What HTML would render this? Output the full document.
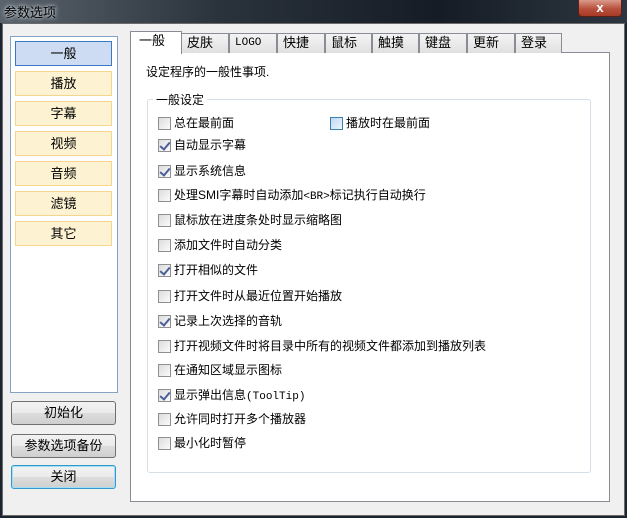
<!DOCTYPE html><html><head><meta charset="utf-8"><style>
*{margin:0;padding:0;box-sizing:border-box}
body{width:627px;height:518px;overflow:hidden;background:#1b2430;font-family:"Liberation Sans","Noto Sans CJK SC",sans-serif;font-size:12px;color:#000;position:relative}
.a{position:absolute}
.title{left:0;top:0;width:627px;height:23px;background:linear-gradient(90deg,#5a636c 0%,#2a323c 35%,#151c26 70%,#2d3640 100%)}
.tt{left:4px;top:2px;color:#000;font-size:13px;text-shadow:0 0 6px #cfd6dd,0 0 3px #cfd6dd}
.close{left:578px;top:0;width:44px;height:17px;background:linear-gradient(#d99a8c,#b8503c 55%,#a83a26);border:1px solid #5a2017;border-top:none;border-radius:0 0 4px 4px;color:#fff;font-weight:bold;text-align:center;font-size:13px;line-height:15px}
.win{left:2px;top:23px;width:623px;height:493px;background:#f0f0f0;border:1px solid #6b6b6b}
.lp{left:10px;top:36px;width:108px;height:357px;background:#fff;border:1px solid #84a3c4}
.it{position:absolute;left:15px;width:97px;height:25px;background:#fdf3d2;border:1px solid #f5d68c;text-align:center;line-height:23px;font-size:13px}
.it.s{background:#cddcf2;border:1px solid #3c78c8}
.btn{position:absolute;left:11px;width:105px;height:24px;border:1px solid #707070;border-radius:3px;background:linear-gradient(#f2f2f2,#ebebeb 50%,#dddddd 51%,#cfcfcf);text-align:center;line-height:22px;font-size:13px}
.tab{position:absolute;top:33px;height:20px;border:1px solid #898c95;border-bottom:none;background:linear-gradient(#f4f4f4,#e0e0e0);font-size:13px;line-height:18px;padding-left:5px}
.pane{left:130px;top:52px;width:480px;height:450px;background:#fff;border:1px solid #898c95}
.grp{left:147px;top:99px;width:444px;height:374px;border:1px solid #d5dfe5;border-radius:3px}
.cb{position:absolute;width:13px;height:13px;border:1px solid #8e8f8f;background:linear-gradient(135deg,#dcdcdc,#fbfbfb)}
.cb.c::after{content:"";position:absolute;left:3px;top:0px;width:4px;height:8px;border:solid #4a5f97;border-width:0 2px 2px 0;transform:rotate(40deg)}
.lb{position:absolute;font-size:12px;line-height:14px}
.m{font-family:"Liberation Mono",monospace;font-size:11px}
</style></head><body>
<div class="a title"></div>
<div class="a tt">参数选项</div>
<div class="a close">x</div>
<div class="a win"></div>
<div class="a lp"></div>
<div class="a it s" style="top:41px">一般</div>
<div class="a it" style="top:71px">播放</div>
<div class="a it" style="top:101px">字幕</div>
<div class="a it" style="top:131px">视频</div>
<div class="a it" style="top:161px">音频</div>
<div class="a it" style="top:191px">滤镜</div>
<div class="a it" style="top:221px">其它</div>
<div class="btn" style="top:401px">初始化</div>
<div class="btn" style="top:434px">参数选项备份</div>
<div class="btn" style="top:465px;border-color:#3399cc;box-shadow:inset 0 0 0 1px #9fe0f5">关闭</div>
<div class="a pane"></div>
<div class="tab" style="left:181px;width:48px">皮肤</div>
<div class="tab" style="left:229px;width:48px;font-family:'Liberation Mono',monospace;font-size:11px">LOGO</div>
<div class="tab" style="left:277px;width:48px">快捷</div>
<div class="tab" style="left:325px;width:47px">鼠标</div>
<div class="tab" style="left:372px;width:47px">触摸</div>
<div class="tab" style="left:419px;width:48px">键盘</div>
<div class="tab" style="left:467px;width:48px">更新</div>
<div class="tab" style="left:515px;width:47px">登录</div>
<div class="tab" style="left:130px;top:31px;width:52px;height:23px;background:#fff;padding-left:8px">一般</div>
<div class="a" style="left:146px;top:63px;font-size:12px">设定程序的一般性事项.</div>
<div class="a grp"></div>
<div class="a" style="left:153px;top:91px;background:#fff;padding:0 3px">一般设定</div>
<div class="cb" style="left:158px;top:117px"></div><div class="lb" style="left:174px;top:116px">总在最前面</div>
<div class="cb" style="left:330px;top:117px;background:linear-gradient(135deg,#bcd8f2,#eef6fd);border-color:#3c7fb1"></div><div class="lb" style="left:346px;top:116px">播放时在最前面</div>
<div class="cb c" style="left:158px;top:139px"></div><div class="lb" style="left:174px;top:138px">自动显示字幕</div>
<div class="cb c" style="left:158px;top:165px"></div><div class="lb" style="left:174px;top:164px">显示系统信息</div>
<div class="cb" style="left:158px;top:189px"></div><div class="lb" style="left:174px;top:188px">处理SMI字幕时自动添加<span class="m">&lt;BR&gt;</span>标记执行自动换行</div>
<div class="cb" style="left:158px;top:214px"></div><div class="lb" style="left:174px;top:213px">鼠标放在进度条处时显示缩略图</div>
<div class="cb" style="left:158px;top:239px"></div><div class="lb" style="left:174px;top:238px">添加文件时自动分类</div>
<div class="cb c" style="left:158px;top:264px"></div><div class="lb" style="left:174px;top:263px">打开相似的文件</div>
<div class="cb" style="left:158px;top:290px"></div><div class="lb" style="left:174px;top:289px">打开文件时从最近位置开始播放</div>
<div class="cb c" style="left:158px;top:315px"></div><div class="lb" style="left:174px;top:314px">记录上次选择的音轨</div>
<div class="cb" style="left:158px;top:340px"></div><div class="lb" style="left:174px;top:339px">打开视频文件时将目录中所有的视频文件都添加到播放列表</div>
<div class="cb" style="left:158px;top:364px"></div><div class="lb" style="left:174px;top:363px">在通知区域显示图标</div>
<div class="cb c" style="left:158px;top:389px"></div><div class="lb" style="left:174px;top:388px">显示弹出信息<span class="m">(ToolTip)</span></div>
<div class="cb" style="left:158px;top:413px"></div><div class="lb" style="left:174px;top:412px">允许同时打开多个播放器</div>
<div class="cb" style="left:158px;top:437px"></div><div class="lb" style="left:174px;top:436px">最小化时暂停</div>
</body></html>
